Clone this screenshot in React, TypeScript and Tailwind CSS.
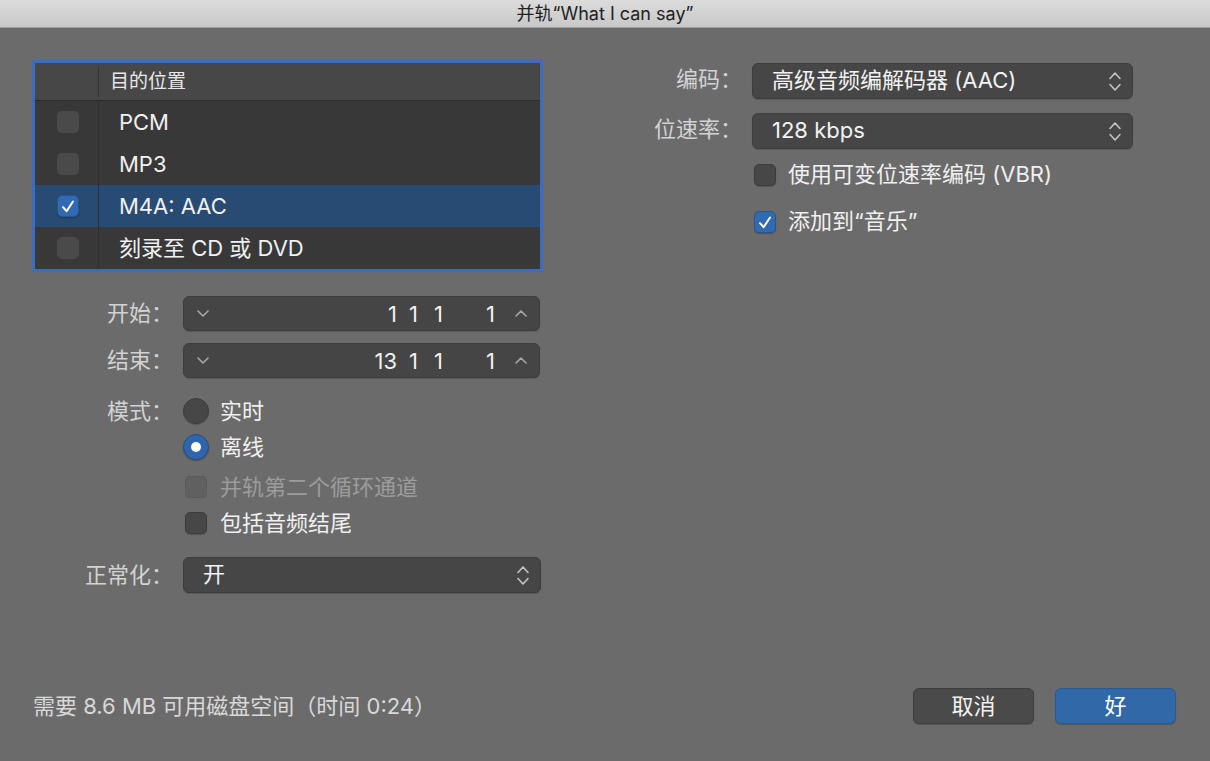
import React from "react";

const ChevronDown = () => (
  <svg width="12" height="7" viewBox="0 0 12 7" fill="none">
    <path d="M1 1l5 5 5-5" stroke="#a8a8a8" strokeWidth="1.6" strokeLinecap="round" strokeLinejoin="round" />
  </svg>
);

const ChevronUp = () => (
  <svg width="12" height="7" viewBox="0 0 12 7" fill="none">
    <path d="M1 6l5-5 5 5" stroke="#a8a8a8" strokeWidth="1.6" strokeLinecap="round" strokeLinejoin="round" />
  </svg>
);

const UpDown = () => (
  <svg width="14" height="21" viewBox="0 0 14 21" fill="none">
    <path d="M2 7.5l5-5.5 5 5.5" stroke="#c4c4c4" strokeWidth="1.6" strokeLinecap="round" strokeLinejoin="round" />
    <path d="M2 13.5l5 5.5 5-5.5" stroke="#c4c4c4" strokeWidth="1.6" strokeLinecap="round" strokeLinejoin="round" />
  </svg>
);

const Check = () => (
  <svg width="14" height="13" viewBox="0 0 14 13" fill="none">
    <path d="M2 7.2l3.6 4L12 1.5" stroke="#ffffff" strokeWidth="2" strokeLinecap="round" strokeLinejoin="round" />
  </svg>
);

const Box = ({ checked, disabled, tone }: { checked?: boolean; disabled?: boolean; tone?: "table" | "panel" }) => {
  if (checked) {
    return (
      <div className="w-[22px] h-[22px] rounded-[5px] bg-[#2f6ab2] border border-[#26558f] flex items-center justify-center shadow-[0_1px_1px_rgba(0,0,0,0.25)]">
        <Check />
      </div>
    );
  }
  if (disabled) {
    return <div className="w-[22px] h-[22px] rounded-[5px] bg-[#606060] border border-[#5a5a5a]" />;
  }
  if (tone === "table") {
    return <div className="w-[22px] h-[22px] rounded-[5px] bg-[#4a4a4a]" />;
  }
  return <div className="w-[22px] h-[22px] rounded-[5px] bg-[#474747] border border-[#3c3c3c] shadow-[0_1px_1px_rgba(0,0,0,0.2)]" />;
};

const Radio = ({ checked }: { checked?: boolean }) =>
  checked ? (
    <div className="w-[26px] h-[26px] rounded-full bg-[#2e65ad] border border-[#24508a] flex items-center justify-center shadow-[0_1px_1px_rgba(0,0,0,0.25)]">
      <div className="w-[10px] h-[10px] rounded-full bg-white" />
    </div>
  ) : (
    <div className="w-[26px] h-[26px] rounded-full bg-[#474747] border border-[#3c3c3c] shadow-[0_1px_1px_rgba(0,0,0,0.2)]" />
  );

const rows = [
  { label: "PCM", checked: false },
  { label: "MP3", checked: false },
  { label: "M4A: AAC", checked: true },
  { label: "刻录至 CD 或 DVD", checked: false },
];

const Stepper = ({ bar }: { bar: string }) => (
  <div className="h-[35px] w-[357px] rounded-[6px] bg-[#454545] border border-[#3d3d3d] flex items-center pl-[13px] pr-[12px] text-[22px] text-[#f0f0f0] shadow-[0_1px_1px_rgba(0,0,0,0.15)]">
    <ChevronDown />
    <div className="flex-1" />
    <span className="w-[40px] text-right leading-none">{bar}</span>
    <span className="w-[21px] text-right leading-none">1</span>
    <span className="w-[25px] text-right leading-none">1</span>
    <span className="w-[52px] text-right leading-none">1</span>
    <div className="ml-[20px]">
      <ChevronUp />
    </div>
  </div>
);

const Select = ({ value, width }: { value: string; width: string }) => (
  <div className={`h-[36px] ${width} rounded-[6px] bg-[#464646] border border-[#3d3d3d] flex items-center pl-[19px] pr-[10px] text-[22px] text-[#f2f2f2] shadow-[0_1px_1px_rgba(0,0,0,0.15)]`}>
    <span className="flex-1 leading-none pb-[3px]">{value}</span>
    <UpDown />
  </div>
);

export default function App() {
  return (
    <div className="w-[1210px] h-[761px] bg-[#6b6b6b] flex flex-col overflow-hidden font-['Inter','Noto_Sans_CJK_SC',sans-serif] text-[#f0f0f0]">
      {/* Title bar */}
      <div className="h-[28px] shrink-0 bg-gradient-to-b from-[#dcdcdc] to-[#c8c8c8] border-b border-[#a0a0a0] flex items-center justify-center text-[18px] text-[#222222]">
        并轨“What I can say”
      </div>

      <div className="flex">
        {/* Left column */}
        <div className="pl-[32px] pt-[32px] w-[620px] shrink-0">
          {/* Table */}
          <div className="w-[511px] border-[3px] border-[#3d6bc0] rounded-[3px] bg-[#383838]">
            <div className="h-[38px] bg-[#474747] border-b border-[#2b2b2b] flex items-center">
              <div className="w-[64px] h-[30px] border-r border-[#333333]" />
              <div className="pl-[11px] text-[19px] text-[#e8e8e8] leading-none">目的位置</div>
            </div>
            {rows.map((r) => (
              <div key={r.label} className={`h-[42px] flex items-center ${r.checked ? "bg-[#284b73]" : "bg-[#383838]"}`}>
                <div className="w-[64px] h-full border-r border-[#2f2f2f] flex items-center justify-center pl-[3px]">
                  <Box checked={r.checked} tone="table" />
                </div>
                <div className="pl-[20px] text-[22px] text-[#f0f0f0] leading-none pb-[1px]">{r.label}</div>
              </div>
            ))}
          </div>

          {/* Form */}
          <div className="grid grid-cols-[151px_360px] mt-[24px]">
            <div className="h-[35px] flex items-center justify-end pr-[10px] text-[22px] text-[#d2d2d2]">开始：</div>
            <Stepper bar="1" />

            <div className="h-[35px] mt-[12px] flex items-center justify-end pr-[10px] text-[22px] text-[#d2d2d2]">结束：</div>
            <div className="mt-[12px]">
              <Stepper bar="13" />
            </div>

            <div className="h-[36px] mt-[15px] flex items-center justify-end pr-[10px] text-[22px] text-[#d2d2d2]">模式：</div>
            <div className="mt-[15px] flex flex-col">
              <div className="h-[36px] flex items-center gap-[11px] text-[22px]">
                <Radio />
                <span>实时</span>
              </div>
              <div className="h-[36px] flex items-center gap-[11px] text-[22px]">
                <Radio checked />
                <span>离线</span>
              </div>
              <div className="h-[36px] mt-[4px] flex items-center gap-[11px] text-[22px] text-[#9c9c9c]">
                <div className="w-[26px] flex justify-center">
                  <Box disabled />
                </div>
                <span>并轨第二个循环通道</span>
              </div>
              <div className="h-[36px] flex items-center gap-[11px] text-[22px]">
                <div className="w-[26px] flex justify-center">
                  <Box />
                </div>
                <span>包括音频结尾</span>
              </div>
            </div>

            <div className="h-[36px] mt-[16px] flex items-center justify-end pr-[10px] text-[22px] text-[#d2d2d2]">正常化：</div>
            <div className="mt-[16px]">
              <Select value="开" width="w-[358px]" />
            </div>
          </div>
        </div>

        {/* Right column */}
        <div className="pt-[35px]">
          <div className="grid grid-cols-[132px_381px]">
            <div className="h-[36px] flex items-center justify-end pr-[10px] pb-[3px] text-[22px] text-[#d2d2d2]">编码：</div>
            <Select value="高级音频编解码器 (AAC)" width="w-[381px]" />

            <div className="h-[36px] mt-[14px] flex items-center justify-end pr-[10px] pb-[3px] text-[22px] text-[#d2d2d2]">位速率：</div>
            <div className="mt-[14px]">
              <Select value="128 kbps" width="w-[381px]" />
            </div>

            <div />
            <div className="mt-[8px] flex flex-col">
              <div className="h-[36px] flex items-center gap-[12px] text-[22px] pl-[2px]">
                <Box />
                <span className="pb-[2px]">使用可变位速率编码 (VBR)</span>
              </div>
              <div className="h-[36px] mt-[11px] flex items-center gap-[12px] text-[22px] pl-[2px]">
                <Box checked />
                <span className="pb-[2px]">添加到“音乐”</span>
              </div>
            </div>
          </div>
        </div>
      </div>

      {/* Footer */}
      <div className="mt-auto mb-[37px] h-[36px] flex items-center pl-[33px] pr-[34px]">
        <div className="flex-1 text-[22px] text-[#d8d8d8]">需要 8.6 MB 可用磁盘空间（时间 0:24）</div>
        <button className="w-[121px] h-[36px] rounded-[6px] bg-[#4a4a4a] border border-[#3e3e3e] text-[22px] text-[#f2f2f2] shadow-[0_1px_1px_rgba(0,0,0,0.2)]">
          取消
        </button>
        <button className="ml-[21px] w-[121px] h-[36px] rounded-[6px] bg-[#3068a8] border border-[#2a5a93] text-[22px] text-white shadow-[0_1px_1px_rgba(0,0,0,0.2)]">
          好
        </button>
      </div>
    </div>
  );
}
